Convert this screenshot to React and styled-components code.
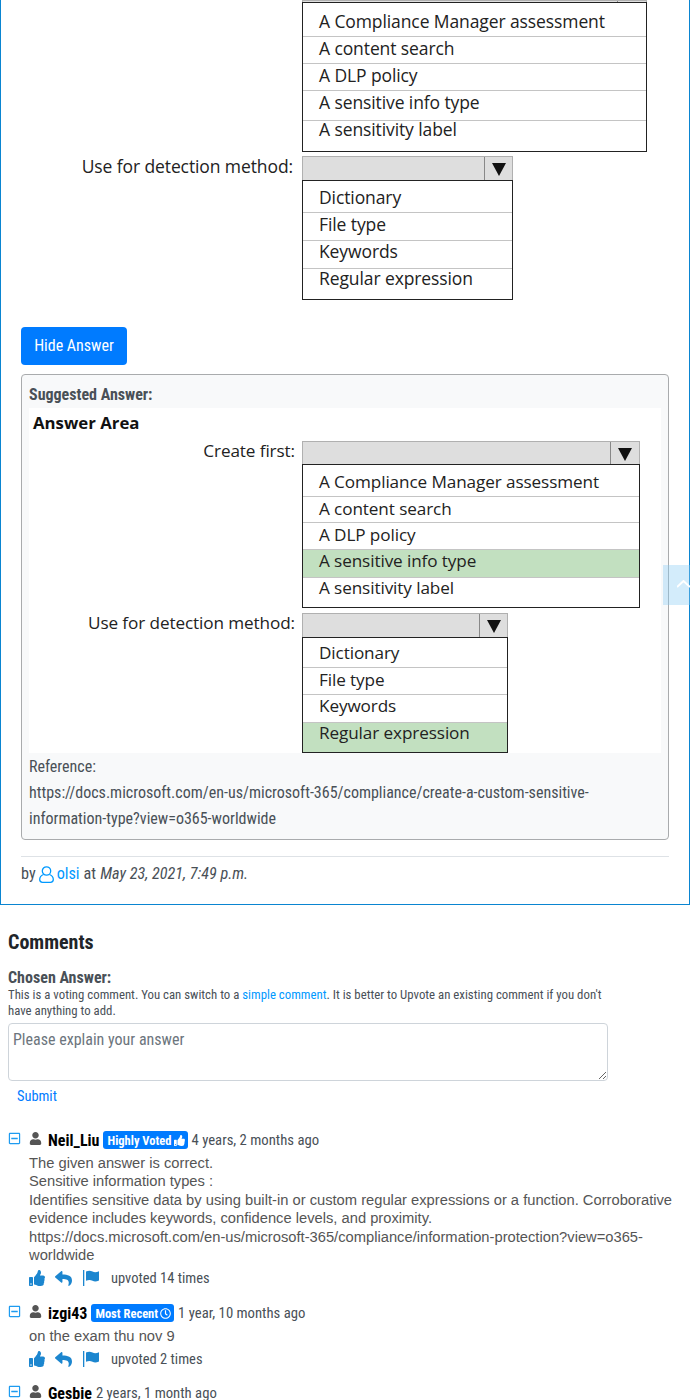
import React from "react"
import styled, { createGlobalStyle } from "styled-components"
import { FaUser, FaThumbsUp, FaReply, FaRegClock, FaRegMinusSquare } from "react-icons/fa"

const Global = createGlobalStyle`
  html, body { margin: 0; padding: 0; background: #fff; }
  body { width: 690px; height: 1400px; overflow: hidden; position: relative; font-family: Roboto, "Liberation Sans", sans-serif; color: #495057; }
`

const condensed = `
  font-family: Roboto, "Liberation Sans", sans-serif;
  font-stretch: 75%;
`

const Card = styled.div`
  border: 1px solid #0a85d1;
  border-top: 0;
  height: 905px;
  padding: 0 20px;
  box-sizing: border-box;
`

const ImageRow = styled.div`
  display: grid;
  grid-template-columns: ${p => p.$label}px auto;
  column-gap: ${p => p.$gap}px;
  justify-content: start;
`

const Label = styled.div`
  font-family: "Open Sans", sans-serif;
  font-stretch: normal;
  font-size: ${p => p.$size}px;
  line-height: 24px;
  color: #222;
  text-align: right;
  margin-top: ${p => p.$top}px;
  letter-spacing: -0.1px;
  white-space: nowrap;
`

const Select = styled.div`
  width: ${p => p.$width}px;
`

const Bar = styled.div`
  height: ${p => p.$height}px;
  background: #dedede;
  border: 1px solid #b0b0b0;
  border-bottom: 0;
  box-sizing: border-box;
  display: flex;
  justify-content: flex-end;
  overflow: hidden;
`

const ArrowBox = styled.div`
  width: ${p => p.$width}px;
  border-left: 1px solid #888;
  display: flex;
  align-items: center;
  justify-content: center;
  box-sizing: border-box;
`

const Arrow = styled.div`
  width: 0;
  height: 0;
  margin-top: 2px;
  border-left: 7px solid transparent;
  border-right: 7px solid transparent;
  border-top: 13px solid #111;
`

const List = styled.div`
  border: 1px solid #222;
  background: #fff;
  box-sizing: border-box;
`

const Item = styled.div`
  height: ${p => p.$height}px;
  background: ${p => (p.$on ? "#c2e0c0" : "#fff")};
  border-top: ${p => (p.$first ? "0" : "1px solid #c4c4c4")};
  box-sizing: border-box;
  padding: ${p => p.$pad}px 0 0 16px;
  font-family: "Open Sans", sans-serif;
  font-stretch: normal;
  font-size: ${p => p.$size}px;
  line-height: 16px;
  letter-spacing: -0.1px;
  color: #222;
  white-space: nowrap;
`

const Spacer = styled.div`
  height: ${p => p.$h}px;
`

const HideButton = styled.button`
  display: block;
  width: 106px;
  height: 38px;
  margin: 0;
  padding: 0 0 2px;
  border: 0;
  border-radius: 4px;
  background: #007bff;
  color: #fff;
  font-size: 16px;
  ${condensed}
`

const Panel = styled.div`
  margin-top: 9px;
  height: 466px;
  box-sizing: border-box;
  background: #f8f9fa;
  border: 1px solid #a9abad;
  border-radius: 4px;
  padding: 9px 7px 0;
  font-size: 16px;
  ${condensed}
`

const PanelTitle = styled.div`
  font-weight: 700;
  line-height: 22px;
  color: #495057;
  height: 24px;
`

const AnswerImage = styled.div`
  background: #fff;
  height: 345px;
  margin-bottom: 1px;
`

const AnswerTitle = styled.div`
  font-family: "Open Sans", sans-serif;
  font-stretch: normal;
  font-weight: 700;
  font-size: 16.8px;
  color: #111;
  line-height: 24px;
  padding: 3px 0 6px 4px;
`

const RefLine = styled.div`
  line-height: 26px;
  color: #495057;
  white-space: nowrap;
`

const Byline = styled.div`
  margin-top: 16px;
  border-top: 1px solid #dee2e6;
  padding-top: 5px;
  font-size: 16.2px;
  line-height: 24px;
  ${condensed}
  color: #495057;
  display: flex;
  align-items: center;
  gap: 4px;
  em { font-style: italic; }
`

const Link = styled.span`
  color: #0099ff;
`

const UserIcon = styled.svg`
  display: block;
  width: 15px;
  height: 17px;
  margin: 0 -1px 0 -1px;
  fill: none;
  stroke: #0099ff;
  stroke-width: 1.3;
`

const Comments = styled.div`
  padding: 25px 0 0 8px;
  ${condensed}
`

const Heading = styled.div`
  font-size: 20px;
  line-height: 24px;
  font-weight: 700;
  color: #212529;
`

const Chosen = styled.div`
  margin-top: 14px;
  font-size: 16px;
  line-height: 19px;
  font-weight: 700;
  color: #495057;
`

const Hint = styled.div`
  font-size: 12.8px;
  line-height: 16px;
  width: 600px;
  color: #495057;
`

const Area = styled.textarea`
  display: block;
  margin-top: 4px;
  width: 600px;
  height: 58px;
  box-sizing: border-box;
  border: 1px solid #ced4da;
  border-radius: 4px;
  padding: 6px 4px;
  font-size: 16px;
  ${condensed}
  color: #495057;
  &::placeholder { color: #6c757d; opacity: 1; }
`

const Submit = styled.div`
  margin: 7px 0 0 9px;
  line-height: 18px;
  font-size: 14.4px;
  color: #007bff;
`

const Comment = styled.div`
  margin-top: ${p => p.$top}px;
`

const Head = styled.div`
  display: flex;
  align-items: center;
  height: 20px;
  color: #495057;
`

const Toggle = styled.span`
  display: flex;
  color: #1e9bf0;
  font-size: 13px;
  width: 21px;
  margin-top: -3px;
`

const Avatar = styled.span`
  display: flex;
  color: #555;
  font-size: 13px;
  width: 19px;
  margin-top: -3px;
`

const Name = styled.span`
  font-weight: 700;
  font-size: 16px;
  color: #000;
  margin-right: 4px;
`

const Badge = styled.span`
  display: inline-flex;
  align-items: center;
  gap: 2px;
  height: 18px;
  padding: 0 3px 0 4px;
  border-radius: 3px;
  background: #007bff;
  color: #fff;
  font-size: 12.5px;
  font-weight: 700;
  margin-right: 4px;
`

const Time = styled.span`
  font-size: 14.72px;
`

const Body = styled.div`
  margin: 4px 0 0 21px;
  width: 650px;
  font-family: "Liberation Sans", Arial, sans-serif;
  font-stretch: normal;
  font-size: 14.72px;
  line-height: 18.4px;
  color: #555;
`

const Actions = styled.div`
  display: flex;
  align-items: center;
  margin: 2px 0 0 21px;
  height: 24px;
  color: #1c86cf;
  svg { display: block; }
`

const ActionIcon = styled.span`
  width: ${p => p.$w}px;
  display: flex;
  font-size: ${p => p.$size}px;
`

const FlagIcon = styled.svg`
  width: 16px;
  height: 16px;
  fill: #1c86cf;
`

const Votes = styled.span`
  font-size: 14.5px;
  color: #495057;
`

const ScrollTop = styled.div`
  position: absolute;
  left: 663px;
  top: 565px;
  width: 27px;
  height: 40px;
  background: rgba(140, 205, 245, 0.38);
  display: flex;
  align-items: center;
  justify-content: flex-end;
  box-sizing: border-box;
`

const Chevron = styled.svg`
  width: 13px;
  height: 8px;
  margin-bottom: 2px;
  fill: none;
  stroke: #fff;
  stroke-width: 2;
`

const DropDown = ({ width, arrow, barHeight, items, size }) => (
  <Select $width={width}>
    <Bar $height={barHeight}>
      <ArrowBox $width={arrow}>{barHeight > 5 && <Arrow />}</ArrowBox>
    </Bar>
    <List>
      {items.map(([text, height, pad, on], i) => (
        <Item key={text} $height={height} $pad={pad} $on={on} $first={i === 0} $size={size}>{text}</Item>
      ))}
    </List>
  </Select>
)

const CommentItem = ({ name, badge, badgeIcon, time, lines, votes, top }) => (
  <Comment $top={top}>
    <Head>
      <Toggle><FaRegMinusSquare /></Toggle>
      <Avatar><FaUser /></Avatar>
      <Name>{name}</Name>
      {badge && <Badge>{badge} {badgeIcon}</Badge>}
      <Time>{time}</Time>
    </Head>
    {lines && <Body>{lines.map((l, i) => <div key={i}>{l}</div>)}</Body>}
    {votes && (
      <Actions>
        <ActionIcon $w={26} $size={16}><FaThumbsUp /></ActionIcon>
        <ActionIcon $w={28} $size={17}><FaReply /></ActionIcon>
        <ActionIcon $w={28} $size={16}>
          <FlagIcon viewBox="0 0 16 16">
            <rect x="0" y="0" width="1.3" height="16" />
            <path d="M3 1.5c2.5-1 4.5-1 6.5 0s4 .8 6.5-.3v9.3c-2.500 1.100-4.500 1.300-6.500.3s-4-1-6.500 0z" />
          </FlagIcon>
        </ActionIcon>
        <Votes>{votes}</Votes>
      </Actions>
    )}
  </Comment>
)

export default function App() {
  return (
    <>
      <Global />
      <Card>
        <ImageRow $label={272} $gap={9}>
          <span />
          <DropDown width={345} arrow={29} barHeight={2} size={17.5} items={[
            ["A Compliance Manager assessment", 33, 10],
            ["A content search", 27, 3],
            ["A DLP policy", 27, 3],
            ["A sensitive info type", 30, 3],
            ["A sensitivity label", 31, 0],
          ]} />
        </ImageRow>
        <Spacer $h={4} />
        <ImageRow $label={272} $gap={9}>
          <Label $size={17.5} $top={-2}>Use for detection method:</Label>
          <DropDown width={211} arrow={28} barHeight={24} size={17.5} items={[
            ["Dictionary", 31, 8],
            ["File type", 28, 3],
            ["Keywords", 28, 2],
            ["Regular expression", 31, 1],
          ]} />
        </ImageRow>
        <Spacer $h={27} />
        <HideButton>Hide Answer</HideButton>
        <Panel>
          <PanelTitle>Suggested Answer:</PanelTitle>
          <AnswerImage>
            <AnswerTitle>Answer Area</AnswerTitle>
            <ImageRow $label={266} $gap={7}>
              <Label $size={17.15} $top={-2}>Create first:</Label>
              <DropDown width={338} arrow={29} barHeight={23} size={17.15} items={[
                ["A Compliance Manager assessment", 31, 9],
                ["A content search", 26, 4],
                ["A DLP policy", 27, 4],
                ["A sensitive info type", 28, 3, true],
                ["A sensitivity label", 30, 2],
              ]} />
            </ImageRow>
            <Spacer $h={5} />
            <ImageRow $label={266} $gap={7}>
              <Label $size={17.15} $top={-2}>Use for detection method:</Label>
              <DropDown width={206} arrow={28} barHeight={24} size={17.15} items={[
                ["Dictionary", 29, 7],
                ["File type", 27, 4],
                ["Keywords", 28, 3],
                ["Regular expression", 30, 2, true],
              ]} />
            </ImageRow>
          </AnswerImage>
          <RefLine>Reference:</RefLine>
          <RefLine>https://docs.microsoft.com/en-us/microsoft-365/compliance/create-a-custom-sensitive-</RefLine>
          <RefLine>information-type?view=o365-worldwide</RefLine>
        </Panel>
        <Byline>
          by
          <UserIcon viewBox="0 0 15 17">
            <circle cx="7.5" cy="5" r="4.2" />
            <path d="M4.500 8.500C2 9.500.7 11.500.7 13.500c0 1.700 1 2.800 2.800 2.800h8c1.800 0 2.800-1.100 2.800-2.800 0-2-1.300-4-3.800-5" />
          </UserIcon>
          <Link>olsi</Link> at <em>May 23, 2021, 7:49 p.m.</em>
        </Byline>
      </Card>
      <Comments>
        <Heading>Comments</Heading>
        <Chosen>Chosen Answer:</Chosen>
        <Hint>This is a voting comment. You can switch to a <Link>simple comment</Link>. It is better to Upvote an existing comment if you don't have anything to add.</Hint>
        <Area placeholder="Please explain your answer" />
        <Submit>Submit</Submit>
        <CommentItem
          top={24}
          name="Neil_Liu"
          badge="Highly Voted"
          badgeIcon={<FaThumbsUp size={11} />}
          time="4 years, 2 months ago"
          lines={[
            "The given answer is correct.",
            "Sensitive information types :",
            "Identifies sensitive data by using built-in or custom regular expressions or a function. Corroborative evidence includes keywords, confidence levels, and proximity.",
            "https://docs.microsoft.com/en-us/microsoft-365/compliance/information-protection?view=o365-worldwide",
          ]}
          votes="upvoted 14 times"
        />
        <CommentItem
          top={12.6}
          name="izgi43"
          badge="Most Recent"
          badgeIcon={<FaRegClock size={11} />}
          time="1 year, 10 months ago"
          lines={["on the exam thu nov 9"]}
          votes="upvoted 2 times"
        />
        <CommentItem top={12} name="Gesbie" time="2 years, 1 month ago" />
      </Comments>
      <ScrollTop>
        <Chevron viewBox="0 0 13 8"><polyline points="0,7 6.500,1 13,7" /></Chevron>
      </ScrollTop>
    </>
  )
}
